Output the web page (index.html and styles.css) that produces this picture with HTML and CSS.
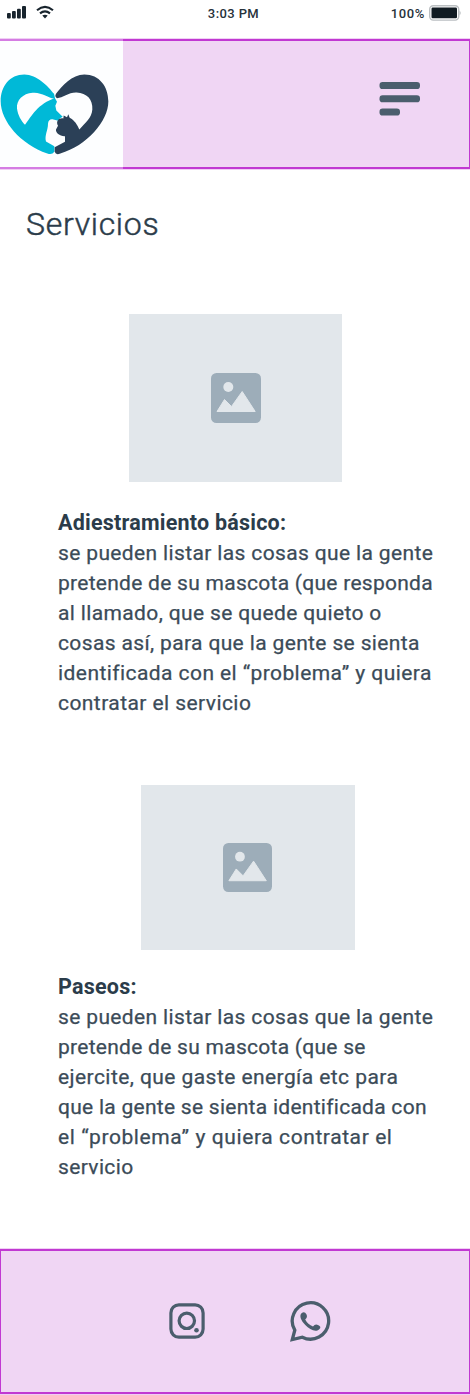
FILE: index.html
```html
<!DOCTYPE html>
<html lang="es">
<head>
<meta charset="utf-8">
<title>Servicios</title>
<link rel="stylesheet" href="styles.css">
</head>
<body>
<div class="status">
  <div class="signal">
    <svg width="20" height="14" viewBox="0 0 20 14"><g fill="#18242d"><rect x="0" y="8" width="3.800" height="5.500" rx="1"/><rect x="5" y="6" width="3.800" height="7.500" rx="1"/><rect x="10" y="3.700" width="3.800" height="9.800" rx="1"/><rect x="15" y="1" width="4" height="12.500" rx="1"/></g></svg>
    <svg width="18" height="14" viewBox="0 0 18 14"><g fill="none" stroke="#18242d" stroke-width="2.100"><path d="M1 5.200Q9-1.600 17 5.200"/><path d="M4 8.400Q9 4.200 14 8.400"/></g><path d="M6.300 10.600Q9 8.700 11.700 10.600L9 13.400Z" fill="#18242d"/></svg>
  </div>
  <div class="time">3:03 PM</div>
  <div class="battery"><span>100%</span>
    <svg width="33" height="16" viewBox="0 0 33 16"><rect x=".7" y=".7" width="29" height="14.400" rx="3.500" fill="#fff" stroke="#bbbfc2" stroke-width="1.400"/><rect x="2.500" y="2.500" width="25.500" height="10.800" rx="1.200" fill="#111b22"/><path d="M30.500 5.500Q33 8 30.500 10.500Z" fill="#bbbfc2"/></svg>
  </div>
</div>
<header class="band header">
  <div class="logo">
    <svg width="123" height="126" viewBox="0 16.500 369 378">
      <path fill="#00b9d7" fill-rule="evenodd" d="M162 175C145 153 111 117 73 117C29 117 2 153 2 197C2 257 62 326 142 354Q156 359 163 349V332L138 318C133 300 144 285 144 265C145 255 150 250 160 252L175 256Q181 253 179 249L188 244L169 225L166 211L171 199L165 188C151 193 127 169 98 172C68 174 49 195 51 219C54 240 63 255 75 268C94 242 115 203 165 188Z"/>
      <path fill="#2b4057" d="M168 175C186 151 216 117 253 117C298 117 325 153 325 198C325 257 260 331 181 354Q168 360 164 349V335L195 319V302C180 303 166 291 168 282L174 271C166 257 178 246 190 249L191 240L201 245L205 236L209 247C224 255 232 268 238 282C257 261 275 247 277 222C279 192 260 172 230 171C206 170 189 187 171 188Q163 184 168 175Z"/>
    </svg>
  </div>
  <svg class="menu" width="42" height="34" viewBox="0 0 42 34"><g fill="#4b5e6d"><rect x=".5" width="40.500" height="7" rx="3.100"/><rect x=".5" y="13.300" width="40.500" height="7" rx="3.100"/><rect x=".5" y="26.600" width="20.500" height="7" rx="3.100"/></g></svg>
</header>
<main>
  <h1>Servicios</h1>
  <div class="photo first">
    <svg width="50" height="50" viewBox="0 0 50 50"><rect width="50" height="50" rx="5.500" fill="#9dadb9"/><g fill="#e2e7eb"><circle cx="17.300" cy="14" r="5"/><path d="M6 38.500L13.500 26.500L20.500 33.500L31.200 18.500L44.200 38.500Z" stroke="#e2e7eb" stroke-linejoin="round"/></g></svg>
  </div>
  <section>
    <h2>Adiestramiento básico:</h2>
    <p>se pueden listar las cosas que la gente<br><span class="tight">pretende de su mascota (que responda</span><br>al llamado, que se quede quieto o<br>cosas así, para que la gente se sienta<br><span class="wide">identificada con el “problema” y quiera</span><br><span class="wide">contratar el servicio</span></p>
  </section>
  <div class="photo second">
    <svg width="49" height="49" viewBox="0 0 50 50"><rect width="50" height="50" rx="5.500" fill="#9dadb9"/><g fill="#e2e7eb"><circle cx="17.300" cy="14" r="5"/><path d="M6 38.500L13.500 26.500L20.500 33.500L31.200 18.500L44.200 38.500Z" stroke="#e2e7eb" stroke-linejoin="round"/></g></svg>
  </div>
  <section>
    <h2>Paseos:</h2>
    <p>se pueden listar las cosas que la gente<br><span class="tight">pretende de su mascota (que se</span><br><span class="wide">ejercite, que gaste energía etc para</span><br><span class="tight">que la gente se sienta identificada con</span><br><span class="wider">el “problema” y quiera contratar el</span><br>servicio</p>
  </section>
</main>
<footer class="band footer">
  <svg class="instagram" width="36" height="36" viewBox="0 0 36 36"><g fill="none" stroke="#4b5e6d" stroke-width="3.200"><rect x="1.900" y="1.900" width="32.200" height="32.200" rx="8"/><circle cx="17.800" cy="17.800" r="7.700"/></g><circle cx="27.500" cy="27.300" r="2.300" fill="#4b5e6d"/></svg>
  <svg width="41" height="41" viewBox="0 0 41 41"><path d="M4.800 29.200A18.200 18.200 0 1 1 12.300 36.200L2.300 38.500Z" fill="none" stroke="#4b5e6d" stroke-width="3.300"/><path d="M11.500 12.200Q14.500 9.700 16.400 13.300Q18 16.400 15.200 18.500Q17.800 23.600 23 25.400Q25.300 22.300 28 24Q32.200 25.600 29 28.500C25.600 31.600 19.500 28.500 15.300 24C11 19.400 9 14.800 11.500 12.200Z" fill="#4b5e6d"/></svg>
</footer>
</body>
</html>
```
FILE: styles.css
```css
* { box-sizing: border-box; }
body {
  margin: 0;
  width: 470px;
  height: 1395px;
  display: flex;
  flex-direction: column;
  background: #fff;
  color: #2b3c4a;
  font-family: Roboto, "Liberation Sans", sans-serif;
}
svg { display: block; flex: none; }
.status {
  height: 39px;
  flex: none;
  display: grid;
  grid-template-columns: 1fr 1fr 1fr;
  align-items: start;
  padding: 5px 8px 0 7px;
  color: #27323b;
  font-size: 13px;
  font-weight: 500;
  line-height: 17px;
}
.signal { display: flex; gap: 9px; }
.time { text-align: center; letter-spacing: .4px; padding-right: 2px; }
.battery { display: flex; justify-content: flex-end; gap: 4px; letter-spacing: .6px; }
.band {
  flex: none;
  background: #f0d6f4;
  border: 2px solid #c139d2;
  border-width: 2px 1px;
  box-shadow: 0 0 0 .5px #e2a0ea;
}
.header {
  height: 130px;
  display: flex;
  justify-content: space-between;
  border-left: 0;
}
.logo {
  width: 123px;
  height: 130px;
  margin: -2px 0;
  background: #fdfeff;
  border: 2px solid #d57de3;
  border-width: 2px 0;
}
.menu { margin: 41px 48px 0 0; }
main { flex: 1; }
h1 {
  margin: 34px 0 0 26px;
  font-size: 32px;
  font-weight: 300;
  -webkit-text-stroke: .5px #2b3c4a;
  line-height: 42px;
  letter-spacing: .7px;
}
.photo { display: flex; justify-content: center; background: #e2e7eb; }
.first { width: 213px; height: 168px; margin: 69px 0 0 129px; padding-top: 59px; }
.second { width: 214px; height: 165px; margin: 67px 0 0 141px; padding: 58px 2px 0 0; }
section { margin-left: 58px; }
.first + section { margin-top: 26px; }
.second + section { margin-top: 22px; }
h2 { margin: 0; font-size: 21.5px; font-weight: 700; line-height: 30px; letter-spacing: .22px; }
p {
  margin: 0;
  white-space: nowrap;
  color: #3b4b58;
  font-size: 21px;
  line-height: 30px;
  letter-spacing: .36px;
  -webkit-text-stroke: .25px #3b4b58;
}
.tight { letter-spacing: .27px; }
.wide { letter-spacing: .43px; }
.wider { letter-spacing: .59px; }
.footer {
  height: 145px;
  margin-bottom: 1px;
  display: flex;
  justify-content: center;
  align-items: flex-start;
  gap: 85px;
  padding: 50px 0 0 29px;
}
.instagram { margin-top: 2px; }
```
